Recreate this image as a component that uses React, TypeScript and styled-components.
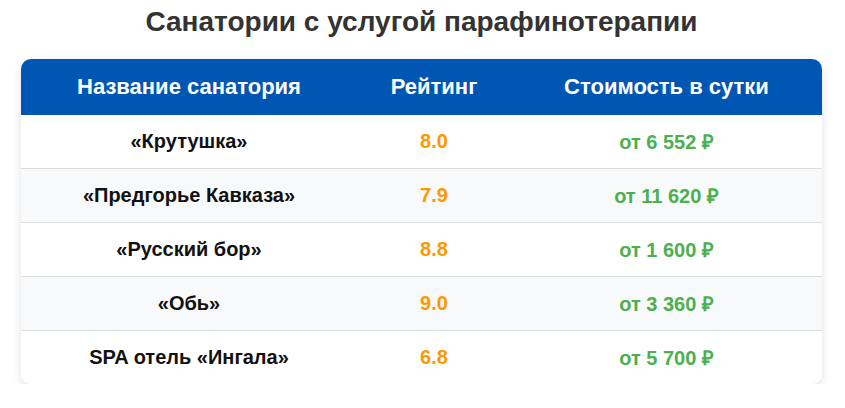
import React from "react";
import styled, { createGlobalStyle } from "styled-components";

const GlobalStyle = createGlobalStyle`
  body {
    margin: 0;
    background: #fff;
    font-family: "Liberation Sans", Arial, sans-serif;
  }
`;

const Page = styled.div`
  padding: 6px 23px 0 21px;
`;

const Title = styled.h2`
  margin: 0 0 21px;
  text-align: center;
  font-size: 28px;
  line-height: 32px;
  font-weight: bold;
  color: #333;
`;

const Table = styled.table`
  width: 100%;
  border-collapse: collapse;
  border-radius: 10px;
  overflow: hidden;
  box-shadow: 0 3px 10px rgba(0, 0, 0, 0.12);
`;

const HeadCell = styled.th`
  background: #0056b3;
  color: #fff;
  font-size: 22px;
  font-weight: bold;
  height: 56px;
  padding: 0 15px;
  text-align: center;
`;

const Row = styled.tr<{ $alt: boolean }>`
  background: ${(p) => (p.$alt ? "#f8f9fa" : "#fff")};
  &:not(:last-child) td {
    border-bottom: 1px solid #dddddd;
  }
`;

const Cell = styled.td<{ $tone?: "name" | "rating" | "price" }>`
  height: 53px;
  padding: 0 15px;
  text-align: center;
  font-size: 20px;
  font-weight: bold;
  color: ${(p) =>
    p.$tone === "rating" ? "#ff9800" : p.$tone === "price" ? "#4caf50" : "#111"};
`;

const rows = [
  { name: "«Крутушка»", rating: "8.0", price: "от 6 552 ₽" },
  { name: "«Предгорье Кавказа»", rating: "7.9", price: "от 11 620 ₽" },
  { name: "«Русский бор»", rating: "8.8", price: "от 1 600 ₽" },
  { name: "«Обь»", rating: "9.0", price: "от 3 360 ₽" },
  { name: "SPA отель «Ингала»", rating: "6.8", price: "от 5 700 ₽" },
];

export default function App() {
  return (
    <Page>
      <GlobalStyle />
      <Title>Санатории с услугой парафинотерапии</Title>
      <Table>
        <thead>
          <tr>
            <HeadCell style={{ width: 306 }}>Название санатория</HeadCell>
            <HeadCell style={{ width: 124 }}>Рейтинг</HeadCell>
            <HeadCell>Стоимость в сутки</HeadCell>
          </tr>
        </thead>
        <tbody>
          {rows.map((r, i) => (
            <Row key={r.name} $alt={i % 2 === 1}>
              <Cell $tone="name">{r.name}</Cell>
              <Cell $tone="rating">{r.rating}</Cell>
              <Cell $tone="price">{r.price}</Cell>
            </Row>
          ))}
        </tbody>
      </Table>
    </Page>
  );
}
